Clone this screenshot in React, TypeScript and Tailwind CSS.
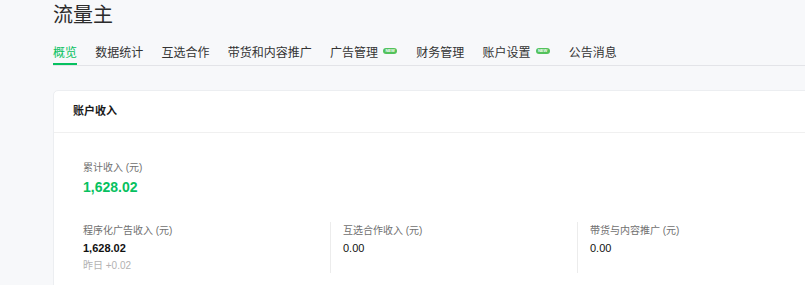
import React from "react";

const FONT = { fontFamily: '"Liberation Sans", "Noto Sans CJK SC", sans-serif' };

function NewBadge() {
  return (
    <span className="ml-[5px] mr-[1px] mt-[4px] flex h-[6px] w-[14px] items-center justify-center self-start rounded-full bg-[#52c25c] text-[4px] font-bold leading-none text-white">
      NEW
    </span>
  );
}

const tabs: { label: string; badge?: boolean; active?: boolean }[] = [
  { label: "概览", active: true },
  { label: "数据统计" },
  { label: "互选合作" },
  { label: "带货和内容推广" },
  { label: "广告管理", badge: true },
  { label: "财务管理" },
  { label: "账户设置", badge: true },
  { label: "公告消息" },
];

function Stat({
  label,
  value,
  bold,
  sub,
  divider,
}: {
  label: string;
  value: string;
  bold?: boolean;
  sub?: string;
  divider?: boolean;
}) {
  return (
    <div
      className={
        "flex w-[247px] shrink-0 flex-col pt-[2px] " +
        (divider ? "border-l border-[#ececec] pl-[12px]" : "")
      }
    >
      <div className="text-[10px] leading-[14px] text-[#707070]">{label}</div>
      <div
        className={
          "mt-[2px] text-[11px] leading-[16px] text-[#111] " +
          (bold ? "font-bold" : "font-normal")
        }
      >
        {value}
      </div>
      {sub && (
        <div className="mt-[2.5px] text-[10px] leading-[14px] text-[#b2b2b2]">{sub}</div>
      )}
    </div>
  );
}

export default function App() {
  return (
    <div className="h-[285px] w-[805px] overflow-hidden bg-[#f7f8fa]" style={FONT}>
      <div className="pl-[53px]">
        <div className="pt-[1px] text-[20px] leading-[28px] text-[#2b2b2b]">流量主</div>
        <div className="mt-[15px] flex w-[900px] gap-[18.25px] border-b border-[#e3e4e8]">
          {tabs.map((t) => (
            <div
              key={t.label}
              className={
                "flex border-b-2 pb-[1px] " +
                (t.active ? "border-[#07c160]" : "border-transparent")
              }
            >
              <span
                className={
                  "text-[12px] leading-[18px] " + (t.active ? "text-[#07c160]" : "text-[#333]")
                }
              >
                {t.label}
              </span>
              {t.badge && <NewBadge />}
            </div>
          ))}
        </div>

        <div className="mt-[24px] w-[900px] rounded-[5px] border border-[#eceef1] bg-white pb-[40px]">
          <div className="flex h-[42px] items-center border-b border-[#f0f0f0] pl-[19px]">
            <span className="text-[11px] font-bold text-[#1a1a1a]">账户收入</span>
          </div>
          <div className="pl-[29px] pt-[28px]">
            <div className="text-[10px] leading-[14px] text-[#707070]">累计收入 (元)</div>
            <div className="mt-[2px] text-[14px] font-bold leading-[20px] text-[#07c160]">
              1,628.02
            </div>
            <div className="mt-[25px] flex">
              <Stat label="程序化广告收入 (元)" value="1,628.02" bold sub="昨日 +0.02" />
              <Stat label="互选合作收入 (元)" value="0.00" divider />
              <Stat label="带货与内容推广 (元)" value="0.00" divider />
            </div>
          </div>
        </div>
      </div>
    </div>
  );
}
